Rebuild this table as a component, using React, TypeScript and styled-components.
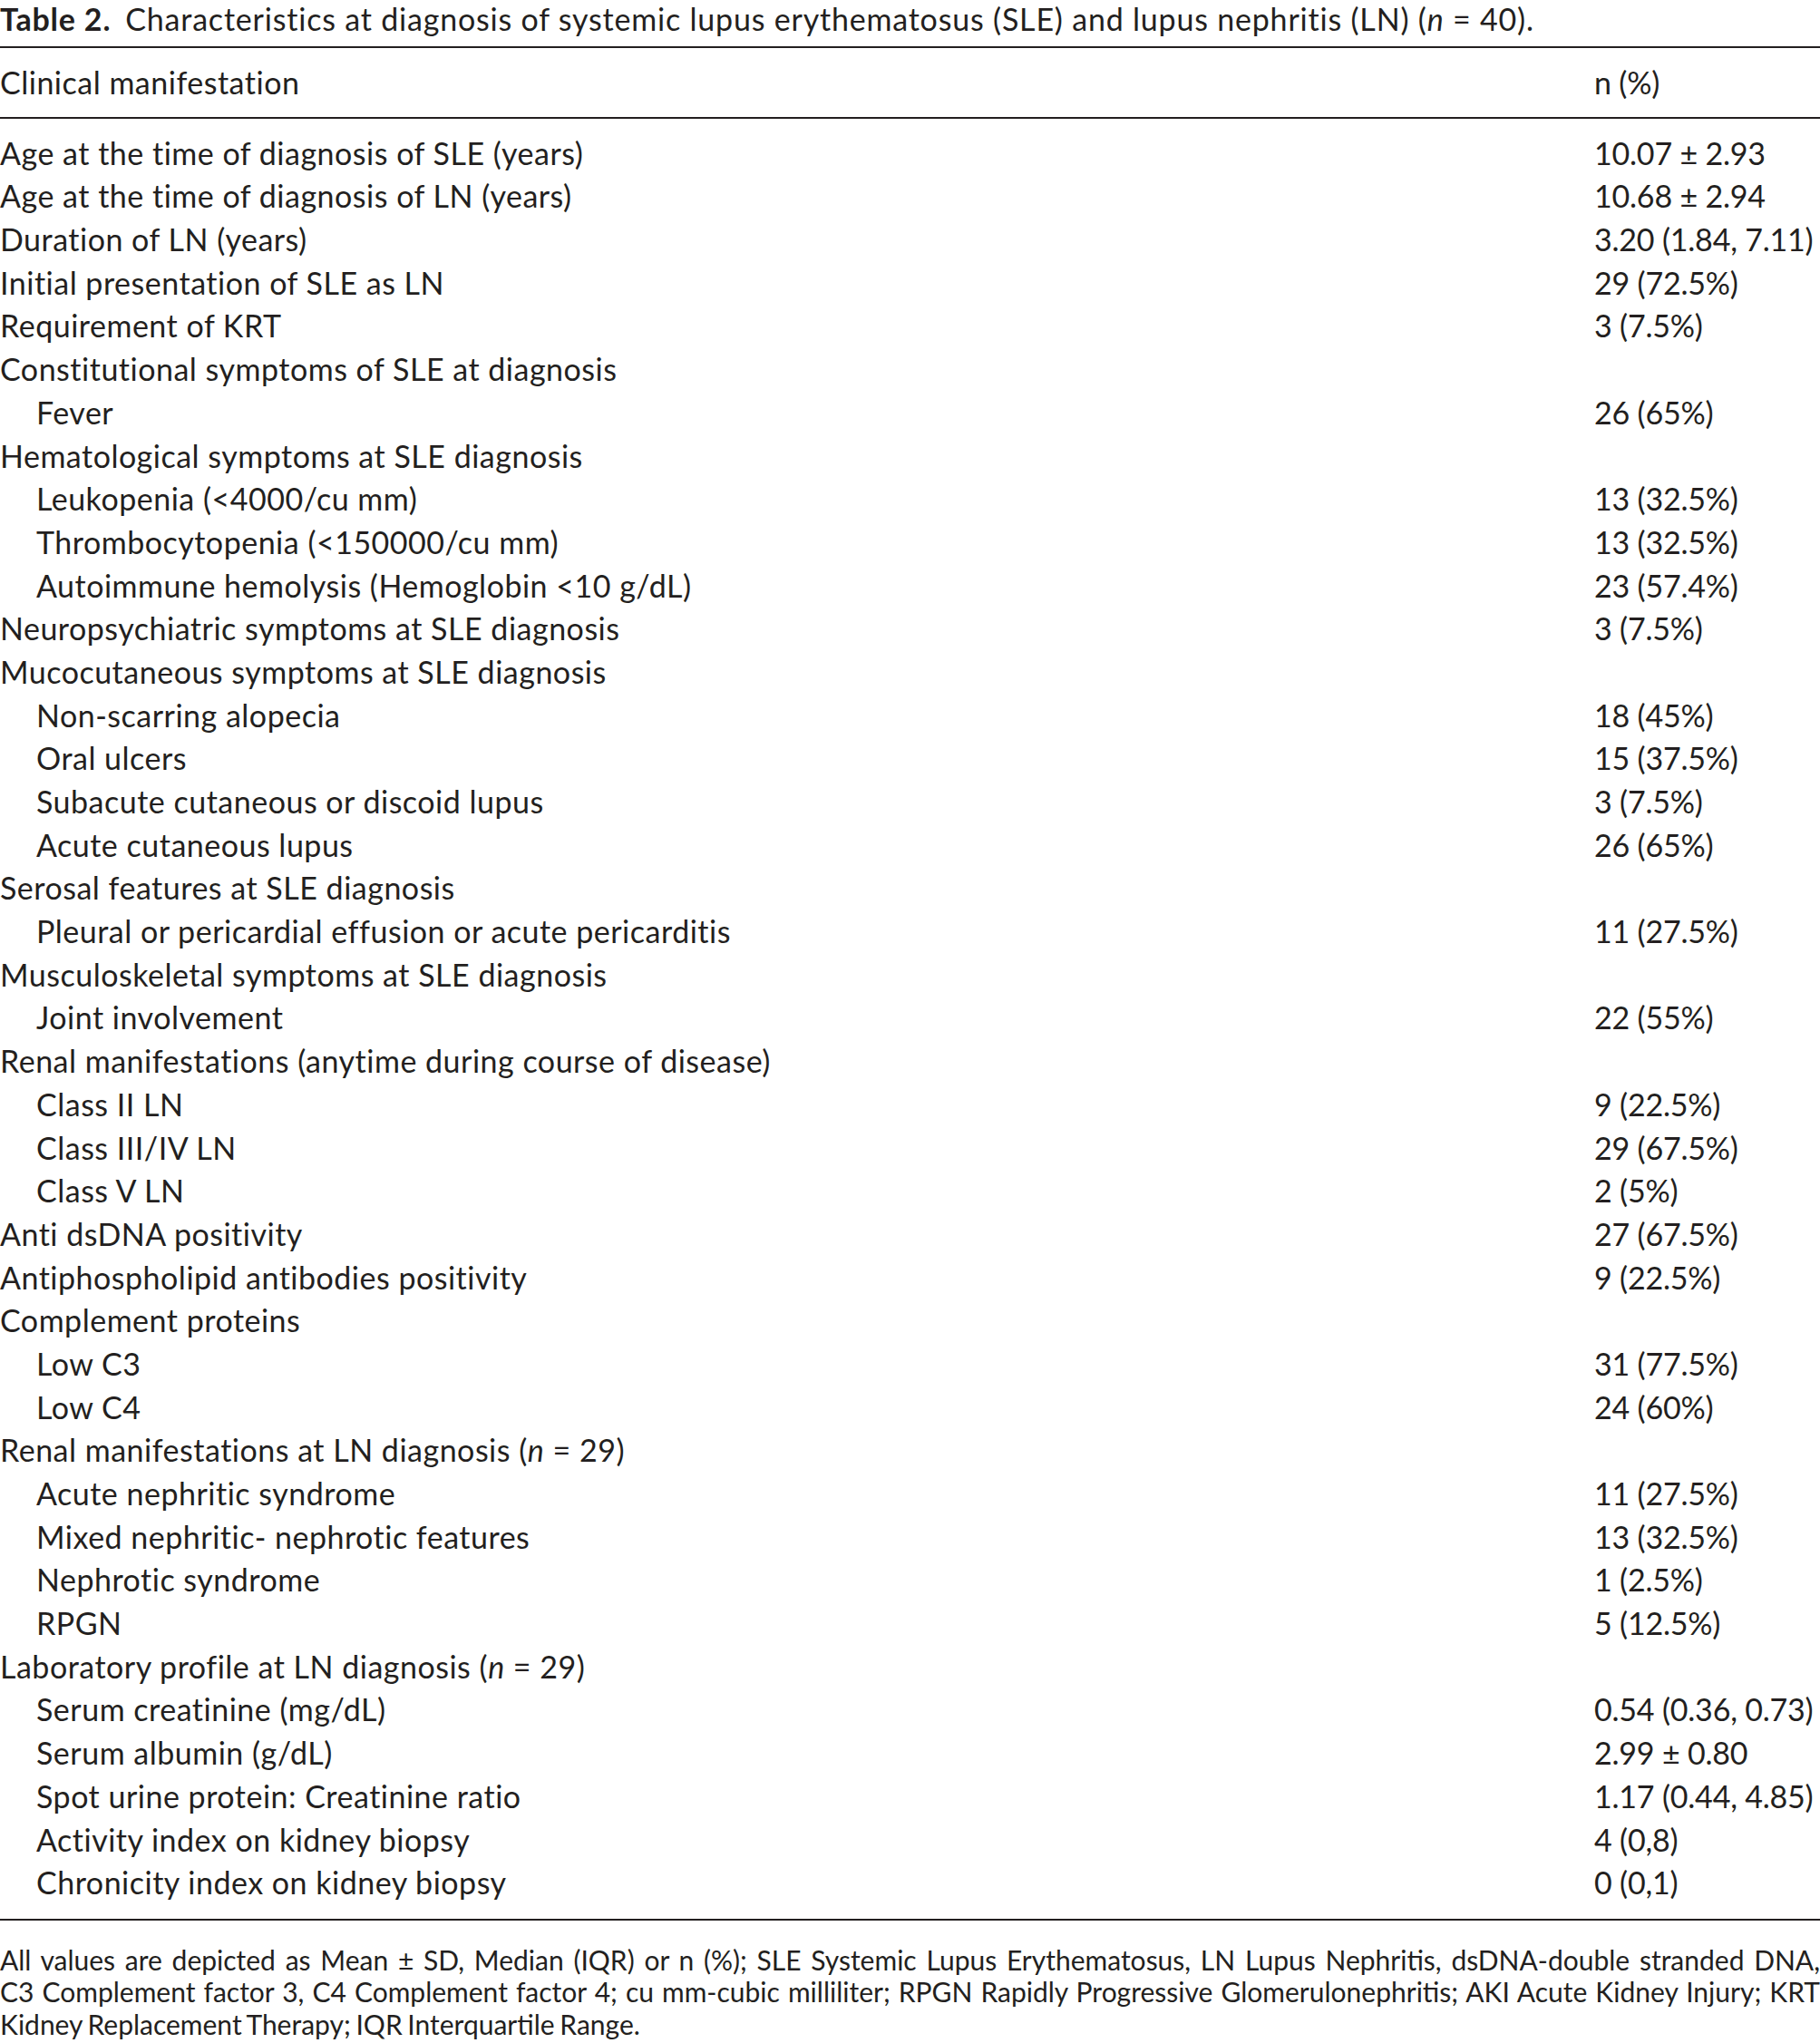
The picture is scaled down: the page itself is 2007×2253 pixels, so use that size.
import styled, { createGlobalStyle } from 'styled-components'

const GlobalStyle = createGlobalStyle`
  html, body {
    margin: 0;
    padding: 0;
    background: #fff;
  }
  body {
    font-family: Lato, 'Open Sans', sans-serif;
    color: #231f20;
  }
`

type Row = { label: React.ReactNode; value?: string; sub?: boolean }

const rows: Row[] = [
  { label: 'Age at the time of diagnosis of SLE (years)', value: '10.07 ± 2.93' },
  { label: 'Age at the time of diagnosis of LN (years)', value: '10.68 ± 2.94' },
  { label: 'Duration of LN (years)', value: '3.20 (1.84, 7.11)' },
  { label: 'Initial presentation of SLE as LN', value: '29 (72.5%)' },
  { label: 'Requirement of KRT', value: '3 (7.5%)' },
  { label: 'Constitutional symptoms of SLE at diagnosis' },
  { label: 'Fever', value: '26 (65%)', sub: true },
  { label: 'Hematological symptoms at SLE diagnosis' },
  { label: 'Leukopenia (<4000/cu mm)', value: '13 (32.5%)', sub: true },
  { label: 'Thrombocytopenia (<150000/cu mm)', value: '13 (32.5%)', sub: true },
  { label: 'Autoimmune hemolysis (Hemoglobin <10 g/dL)', value: '23 (57.4%)', sub: true },
  { label: 'Neuropsychiatric symptoms at SLE diagnosis', value: '3 (7.5%)' },
  { label: 'Mucocutaneous symptoms at SLE diagnosis' },
  { label: 'Non-scarring alopecia', value: '18 (45%)', sub: true },
  { label: 'Oral ulcers', value: '15 (37.5%)', sub: true },
  { label: 'Subacute cutaneous or discoid lupus', value: '3 (7.5%)', sub: true },
  { label: 'Acute cutaneous lupus', value: '26 (65%)', sub: true },
  { label: 'Serosal features at SLE diagnosis' },
  { label: 'Pleural or pericardial effusion or acute pericarditis', value: '11 (27.5%)', sub: true },
  { label: 'Musculoskeletal symptoms at SLE diagnosis' },
  { label: 'Joint involvement', value: '22 (55%)', sub: true },
  { label: 'Renal manifestations (anytime during course of disease)' },
  { label: 'Class II LN', value: '9 (22.5%)', sub: true },
  { label: 'Class III/IV LN', value: '29 (67.5%)', sub: true },
  { label: 'Class V LN', value: '2 (5%)', sub: true },
  { label: 'Anti dsDNA positivity', value: '27 (67.5%)' },
  { label: 'Antiphospholipid antibodies positivity', value: '9 (22.5%)' },
  { label: 'Complement proteins' },
  { label: 'Low C3', value: '31 (77.5%)', sub: true },
  { label: 'Low C4', value: '24 (60%)', sub: true },
  {
    label: (
      <>
        Renal manifestations at LN diagnosis (<i>n</i> = 29)
      </>
    ),
  },
  { label: 'Acute nephritic syndrome', value: '11 (27.5%)', sub: true },
  { label: 'Mixed nephritic- nephrotic features', value: '13 (32.5%)', sub: true },
  { label: 'Nephrotic syndrome', value: '1 (2.5%)', sub: true },
  { label: 'RPGN', value: '5 (12.5%)', sub: true },
  {
    label: (
      <>
        Laboratory profile at LN diagnosis (<i>n</i> = 29)
      </>
    ),
  },
  { label: 'Serum creatinine (mg/dL)', value: '0.54 (0.36, 0.73)', sub: true },
  { label: 'Serum albumin (g/dL)', value: '2.99 ± 0.80', sub: true },
  { label: 'Spot urine protein: Creatinine ratio', value: '1.17 (0.44, 4.85)', sub: true },
  { label: 'Activity index on kidney biopsy', value: '4 (0,8)', sub: true },
  { label: 'Chronicity index on kidney biopsy', value: '0 (0,1)', sub: true },
]

// footnote lines are justified to the full width, breaks kept as in the source
const footnote = [
  'All values are depicted as Mean ± SD, Median (IQR) or n (%); SLE Systemic Lupus Erythematosus, LN Lupus Nephritis, dsDNA-double stranded DNA,',
  'C3 Complement factor 3, C4 Complement factor 4; cu mm-cubic milliliter; RPGN Rapidly Progressive Glomerulonephritis; AKI Acute Kidney Injury; KRT',
  'Kidney Replacement Therapy; IQR Interquartile Range.',
]

export default function App() {
  return (
    <Page>
      <GlobalStyle />
      <Caption>
        <CaptionLabel>Table 2.</CaptionLabel>
        Characteristics at diagnosis of systemic lupus erythematosus (SLE) and lupus nephritis (LN) (
        <i>n</i> = 40).
      </Caption>
      <Table>
        <HeaderRow>
          <Label>Clinical manifestation</Label>
          <Value>n (%)</Value>
        </HeaderRow>
        <Body>
          {rows.map((r, i) => (
            <BodyRow key={i}>
              <Label $indent={r.sub}>{r.label}</Label>
              <Value>{r.value}</Value>
            </BodyRow>
          ))}
        </Body>
      </Table>
      <Footnote>
        {footnote.map((line, i) => (
          <FootLine key={i} $last={i === footnote.length - 1}>
            {line}
          </FootLine>
        ))}
      </Footnote>
    </Page>
  )
}

const Page = styled.div`
  width: 2007px;
  min-height: 2253px;
  box-sizing: border-box;
`

const Caption = styled.div`
  font-size: 34px;
  line-height: 41px;
  letter-spacing: 0.8px;
  white-space: nowrap;
  margin-bottom: 10px;

  i {
    font-style: italic;
  }
`

const CaptionLabel = styled.b`
  font-weight: 700;
  margin-right: 16px;
`

const Table = styled.div`
  border-top: 2px solid #231f20;
  border-bottom: 2px solid #231f20;
`

const HeaderRow = styled.div`
  display: grid;
  grid-template-columns: 1758px 1fr;
  font-size: 34px;
  line-height: 47.7px;
  padding: 14px 0 14px;
  border-bottom: 2px solid #231f20;
`

const Body = styled.div`
  padding: 14px 0 16px;
`

const BodyRow = styled.div`
  display: grid;
  grid-template-columns: 1758px 1fr;
  font-size: 34px;
  line-height: 47.7px;
  height: 47.7px;
`

const Label = styled.div<{ $indent?: boolean }>`
  padding-left: ${(p) => (p.$indent ? '40px' : '0')};
  letter-spacing: 0.5px;
  white-space: nowrap;

  i {
    font-style: italic;
  }
`

const Value = styled.div`
  letter-spacing: -0.2px;
  white-space: nowrap;
`

const Footnote = styled.div`
  margin-top: 26px;
  font-size: 30px;
  line-height: 35.5px;
  word-spacing: -2px;
`

const FootLine = styled.div<{ $last?: boolean }>`
  text-align: justify;
  text-align-last: ${(p) => (p.$last ? 'left' : 'justify')};
  white-space: nowrap;
`
